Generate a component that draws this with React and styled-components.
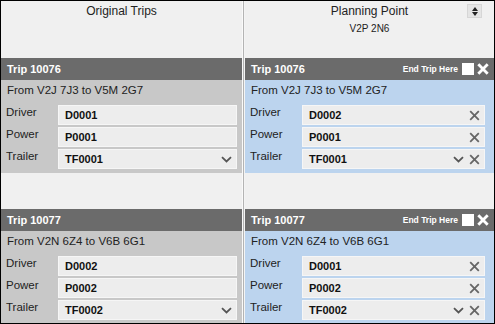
import React from 'react';
import styled, { createGlobalStyle } from 'styled-components';

const GlobalStyle = createGlobalStyle`
    html, body {
        margin: 0;
        padding: 0;
        background: #f0f0f0;
    }
    * {
        box-sizing: border-box;
    }
`;

const Frame = styled.div`
    display: grid;
    grid-template-columns: 241px 3px 249px;
    width: 495px;
    height: 324px;
    overflow: hidden;
    border: 1px solid #000;
    background: #f0f0f0;
    font-family: "Liberation Sans", Arial, sans-serif;
    color: #222;
`;

const Divider = styled.div`
    border-left: 1px solid #fafafa;
    border-right: 1px solid #f4f4f4;
    background: #b4b4b4;
`;

const Column = styled.div`
    display: flex;
    flex-direction: column;
    min-width: 0;
`;

const ColumnHead = styled.div`
    position: relative;
    height: 57px;
    padding-top: 3px;
    text-align: center;
    h2 {
        margin: 0;
        font-size: 12px;
        font-weight: 400;
        line-height: 14px;
    }
    p {
        margin: 5px 0 0;
        font-size: 10px;
        line-height: 12px;
    }
`;

const SortButton = styled.button`
    position: absolute;
    top: 3px;
    right: 12px;
    display: flex;
    flex-direction: column;
    align-items: center;
    justify-content: center;
    gap: 1px;
    width: 15px;
    height: 14px;
    padding: 0;
    border: 1px solid #d6d6d6;
    background: #e4e4e4;
    span {
        width: 0;
        height: 0;
        border-left: 3px solid transparent;
        border-right: 3px solid transparent;
    }
    .up {
        border-bottom: 4px solid #222;
    }
    .down {
        border-top: 4px solid #222;
    }
`;

const Card = styled.div`
    margin-bottom: 36px;
`;

const CardHead = styled.div`
    display: flex;
    align-items: center;
    height: 22px;
    padding: 0 5px 0 6px;
    background: #6b6b6b;
    color: #fff;
    h3 {
        flex: 1;
        margin: 0;
        font-size: 11px;
        font-weight: 700;
    }
`;

const EndTrip = styled.label`
    display: flex;
    align-items: center;
    font-size: 8.5px;
    font-weight: 700;
    span.box {
        width: 12px;
        height: 12px;
        margin: 0 3px 0 4px;
        background: #fff;
    }
`;

const CardBody = styled.div`
    padding: 0 ${p => p.$padRight}px 4px 5px;
    background: ${p => p.$planned ? '#bcd4ee' : '#c8c8c8'};
`;

const Route = styled.div`
    height: 25px;
    padding-left: 1px;
    font-size: 11.5px;
    line-height: 20px;
`;

const Rows = styled.div`
    display: grid;
    grid-template-columns: 52px 1fr;
    row-gap: 2px;
`;

const Label = styled.div`
    height: 20px;
    font-size: 11.5px;
    line-height: 14px;
`;

const Field = styled.div`
    display: flex;
    align-items: center;
    gap: 5px;
    height: 20px;
    padding: 0 4px 0 6px;
    border: 1px solid #f6f6f6;
    background: #ededed;
    font-size: 11px;
    font-weight: 700;
    color: #111;
    span {
        flex: 1;
    }
    svg {
        flex: none;
    }
`;

const Chevron = () => (
    <svg width="11" height="7" viewBox="0 0 11 7">
        <path d="M1 1.2 L5.5 5.5 L10 1.2" fill="none" stroke="#555" strokeWidth="1.8" />
    </svg>
);

const Cross = ({ color = '#666', size = 11, width = 1.8 }) => (
    <svg width={size} height={size} viewBox="0 0 11 11">
        <path d="M1.2 1.2 L9.8 9.8 M9.8 1.2 L1.2 9.8" fill="none" stroke={color} strokeWidth={width} />
    </svg>
);

const original = [
    { id: '10076', route: 'From V2J 7J3 to V5M 2G7', driver: 'D0001', power: 'P0001', trailer: 'TF0001' },
    { id: '10077', route: 'From V2N 6Z4 to V6B 6G1', driver: 'D0002', power: 'P0002', trailer: 'TF0002' },
];

const planned = [
    { id: '10076', route: 'From V2J 7J3 to V5M 2G7', driver: 'D0002', power: 'P0001', trailer: 'TF0001' },
    { id: '10077', route: 'From V2N 6Z4 to V6B 6G1', driver: 'D0001', power: 'P0002', trailer: 'TF0002' },
];

function TripCard({ trip, planning }) {
    return (
        <Card>
            <CardHead>
                <h3>Trip {trip.id}</h3>
                {planning && (
                    <EndTrip>
                        End Trip Here
                        <span className="box" />
                        <Cross color="#fff" size={12} width={2.6} />
                    </EndTrip>
                )}
            </CardHead>
            <CardBody $planned={planning} $padRight={planning ? 9 : 5}>
                <Route>{trip.route}</Route>
                <Rows>
                    <Label>Driver</Label>
                    <Field>
                        <span>{trip.driver}</span>
                        {planning && <Cross />}
                    </Field>
                    <Label>Power</Label>
                    <Field>
                        <span>{trip.power}</span>
                        {planning && <Cross />}
                    </Field>
                    <Label>Trailer</Label>
                    <Field>
                        <span>{trip.trailer}</span>
                        <Chevron />
                        {planning && <Cross />}
                    </Field>
                </Rows>
            </CardBody>
        </Card>
    );
}

export default function App() {
    return (
        <>
            <GlobalStyle />
            <Frame>
                <Column>
                    <ColumnHead>
                        <h2>Original Trips</h2>
                    </ColumnHead>
                    {original.map(trip => (
                        <TripCard key={trip.id} trip={trip} />
                    ))}
                </Column>
                <Divider />
                <Column>
                    <ColumnHead>
                        <h2>Planning Point</h2>
                        <p>V2P 2N6</p>
                        <SortButton>
                            <span className="up" />
                            <span className="down" />
                        </SortButton>
                    </ColumnHead>
                    {planned.map(trip => (
                        <TripCard key={trip.id} trip={trip} planning />
                    ))}
                </Column>
            </Frame>
        </>
    );
}
